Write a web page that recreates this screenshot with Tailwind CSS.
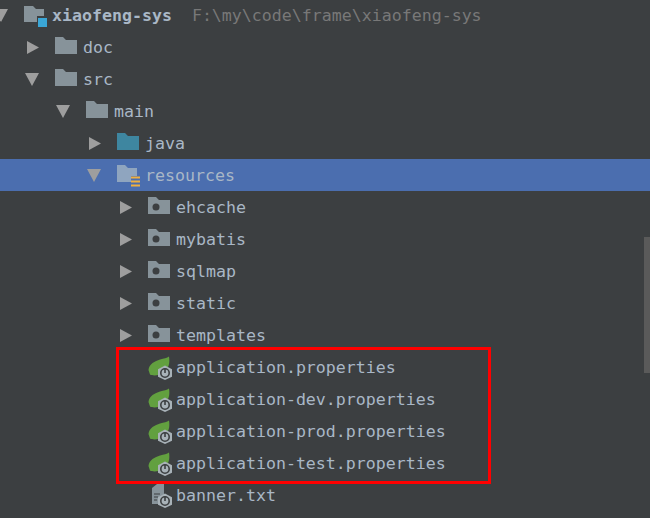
<!DOCTYPE html>
<html lang="en">
<head>
  <meta charset="UTF-8">
  <title>xiaofeng-sys</title>
  <script src="https://cdn.jsdelivr.net/npm/@tailwindcss/browser@4"></script>
</head>
<body class="relative h-[518px] w-[650px] overflow-hidden bg-[#3c3f41] font-['DejaVu_Sans_Mono',monospace] text-[16.6px] text-[#a9b7c6]">
  <svg class="hidden">
    <symbol id="right" viewBox="0 0 14 13"><path d="M1 0 L13 6.5 L1 13Z" fill="#9e9e9e"/></symbol>
    <symbol id="down" viewBox="0 0 14 13"><path d="M0 0 L14 0 L7 13Z" fill="#9e9e9e"/></symbol>
    <symbol id="folder" viewBox="0 0 22 18"><path d="M0 0 H8 L11 3 H22 V17 H0Z" fill="#87939a"/></symbol>
    <symbol id="source" viewBox="0 0 22 18"><path d="M0 0 H8 L11 3 H22 V17 H0Z" fill="#3e86a0"/></symbol>
    <symbol id="pkg" viewBox="0 0 22 18"><path d="M0 0 H8 L11 3 H22 V17 H0Z" fill="#87939a"/><circle cx="8" cy="10" r="3.500" fill="#3c3f41"/></symbol>
    <symbol id="module" viewBox="0 0 24 24"><path d="M0 2 H9 L12 5 H20 V18 H0Z" fill="#87939a"/><rect x="13" y="12" width="11" height="12" fill="#3c3f41"/><rect x="14" y="14" width="9" height="9" fill="#3aa6d6"/></symbol>
    <symbol id="res" viewBox="0 0 24 24"><path d="M0 1 H8 L11 4 H20 V18 H0Z" fill="#8fa5bf"/><rect x="14" y="12" width="9" height="12" fill="#4b6eaf"/><path d="M14 13.500 H23 M14 17.500 H23 M14 21.500 H23" stroke="#f0b040" stroke-width="2"/></symbol>
    <symbol id="spring" viewBox="0 0 24 24">
      <path d="M0.500 14 C1 8 7 5 12 3.500 C16 2.500 19 2 21 0.500 C22 7 21 12 16 16 C11 20 5 20 2 18.500Z" fill="#62a03f"/>
      <path d="M17 9.500 L24 13.200 V20.800 L17 24 L10 20.800 V13.200Z" fill="#a8b2b8"/>
      <circle cx="17" cy="17" r="4.200" fill="none" stroke="#3c3f41" stroke-width="1.600"/><path d="M17 12.500 V17" stroke="#3c3f41" stroke-width="1.600"/>
    </symbol>
    <symbol id="txt" viewBox="0 0 24 24">
      <path d="M4 4 L9 0 H16 V20 H4Z" fill="#87939a"/><path d="M6 10 H12 M6 13 H10 M6 16 H9" stroke="#3c3f41" stroke-width="1.200"/>
      <path d="M17 9.500 L24 13.200 V20.800 L17 24 L10 20.800 V13.200Z" fill="#a8b2b8"/>
      <circle cx="17" cy="17" r="4.200" fill="none" stroke="#3c3f41" stroke-width="1.600"/><path d="M17 12.500 V17" stroke="#3c3f41" stroke-width="1.600"/>
    </symbol>
  </svg>

  <!-- project tree -->
  <ul id="tree" class="-mt-px"></ul>

  <!-- scrollbar thumb -->
  <div class="absolute right-0 top-[237px] h-[136px] w-[6px] bg-[#5a5a5a]"></div>
  <!-- red annotation box -->
  <div class="absolute left-[116px] top-[347px] h-[137px] w-[375px] border-[3px] border-[#ff0000]"></div>

  <script>
    const rows = [
      { depth: 0, arrow: 'down', icon: 'module', label: 'xiaofeng-sys', hint: 'F:\\my\\code\\frame\\xiaofeng-sys' },
      { depth: 1, arrow: 'right', icon: 'folder', label: 'doc' },
      { depth: 1, arrow: 'down', icon: 'folder', label: 'src' },
      { depth: 2, arrow: 'down', icon: 'folder', label: 'main' },
      { depth: 3, arrow: 'right', icon: 'source', label: 'java' },
      { depth: 3, arrow: 'down', icon: 'res', label: 'resources', selected: true },
      { depth: 4, arrow: 'right', icon: 'pkg', label: 'ehcache' },
      { depth: 4, arrow: 'right', icon: 'pkg', label: 'mybatis' },
      { depth: 4, arrow: 'right', icon: 'pkg', label: 'sqlmap' },
      { depth: 4, arrow: 'right', icon: 'pkg', label: 'static' },
      { depth: 4, arrow: 'right', icon: 'pkg', label: 'templates' },
      { depth: 4, icon: 'spring', label: 'application.properties' },
      { depth: 4, icon: 'spring', label: 'application-dev.properties' },
      { depth: 4, icon: 'spring', label: 'application-prod.properties' },
      { depth: 4, icon: 'spring', label: 'application-test.properties' },
      { depth: 4, icon: 'txt', label: 'banner.txt' },
    ];

    const tree = document.getElementById('tree');
    rows.forEach(row => {
      const wide = ['module', 'res', 'spring', 'txt'].includes(row.icon);
      const li = document.createElement('li');
      li.className = 'flex h-8 items-center whitespace-pre' + (row.selected ? ' bg-[#4b6eaf]' : '');
      li.innerHTML = `
        <div class="flex items-center" style="margin-left: ${31 * row.depth - 5}px">
          <span class="flex w-[29px] shrink-0">${row.arrow
            ? `<svg class="mt-[2px] h-[13px] w-[14px] ${row.arrow === 'down' ? '-ml-px' : ''}"><use href="#${row.arrow}"/></svg>`
            : ''}</span>
          <span class="flex w-7 shrink-0">${wide
            ? `<svg class="mt-[2px] h-6 w-6"><use href="#${row.icon}"/></svg>`
            : `<svg class="-mt-[2px] h-[18px] w-[22px]"><use href="#${row.icon}"/></svg>`}</span>
          <span class="pt-[2px] ${row.depth === 0 ? 'font-bold' : ''}">${row.label}</span>
          ${row.hint ? `<span class="ml-5 pt-[2px] text-[#787878]">${row.hint}</span>` : ''}
        </div>`;
      tree.appendChild(li);
    });
  </script>
</body>
</html>
